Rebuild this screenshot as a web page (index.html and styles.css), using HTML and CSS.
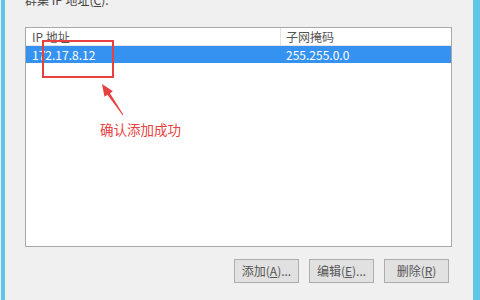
FILE: index.html
```html
<!DOCTYPE html>
<html>

	<head>
		<meta charset="UTF-8">
		<title>群集 IP 地址</title>
		<link rel="stylesheet" href="styles.css">
	</head>

	<body>
		<div class="window">
			<div class="edge-left"></div>
			<div class="panel">
				<div class="caption">群集 IP 地址(<u>C</u>):</div>
				<div class="listbox">
					<div class="row head">
						<div class="col first">IP 地址</div>
						<div class="col">子网掩码</div>
					</div>
					<div class="row selected">
						<div class="col first">172.17.8.12</div>
						<div class="col">255.255.0.0</div>
					</div>
				</div>
				<div class="buttons">
					<div class="btn">添加(<u>A</u>)...</div>
					<div class="btn">编辑(<u>E</u>)...</div>
					<div class="btn">删除(<u>R</u>)</div>
				</div>
			</div>
			<div class="edge-right"></div>
		</div>

		<!-- 标注 -->
		<div class="mark-box"></div>
		<svg class="mark-arrow" width="480" height="300" viewBox="0 0 480 300">
			<polygon points="102,84 112.9,91.2 110,93.2 123.4,114.7 122.6,115.3 107.5,94.8 104.5,96.8" fill="#e8413f" />
		</svg>
		<div class="mark-text">确认添加成功</div>
	</body>

</html>
```

FILE: styles.css
```css
* {
	margin: 0;
	padding: 0;
	box-sizing: border-box;
}

body {
	width: 480px;
	height: 300px;
	overflow: hidden;
	position: relative;
	background: #f0f0f0;
	font-family: "Noto Sans CJK SC", "Liberation Sans", sans-serif;
	font-size: 12px;
	color: #333333;
}

.window {
	display: flex;
	height: 300px;
}

.edge-left {
	width: 4px;
	margin-left: 1px;
	background: #5ec6e6;
}

.edge-right {
	width: 7px;
	background: #5ec6e6;
}

.panel {
	flex: 1;
	display: flex;
	flex-direction: column;
	padding: 0 21px 0 20px;
}

.caption {
	height: 16px;
	line-height: 16px;
	margin-top: -8px;
	margin-bottom: 19px;
	color: #444444;
}

.caption u,
.btn u {
	text-decoration: underline;
}

.listbox {
	height: 220px;
	background: #FFFFFF;
	border: 1px solid #a8a8a8;
}

.row {
	display: flex;
	height: 17px;
	line-height: 17px;
}

.row.head {
	height: 18px;
	line-height: 18px;
	color: #555555;
	border-bottom: 1px solid #e6e6e6;
}

.row .col {
	padding-left: 5px;
	flex: 1;
}

.row .col.first {
	flex: none;
	width: 255px;
	padding-left: 6px;
}

.row.head .col.first {
	border-right: 1px solid #e3e3e3;
}

.row.selected {
	background: #3592f0;
	color: #FFFFFF;
}

.buttons {
	display: flex;
	justify-content: flex-end;
	gap: 10px;
	margin-top: 12px;
	padding-right: 3px;
}

.btn {
	width: 65px;
	height: 24px;
	line-height: 22px;
	text-align: center;
	background: #e1e1e1;
	border: 1px solid #adadad;
	color: #555555;
}

.mark-box {
	position: absolute;
	left: 42px;
	top: 40px;
	width: 72px;
	height: 38px;
	border: 2px solid #e8413f;
}

.mark-arrow {
	position: absolute;
	left: 0;
	top: 0;
}

.mark-text {
	position: absolute;
	left: 100px;
	top: 120px;
	font-size: 13.5px;
	line-height: 18px;
	color: #e8413f;
}
```
